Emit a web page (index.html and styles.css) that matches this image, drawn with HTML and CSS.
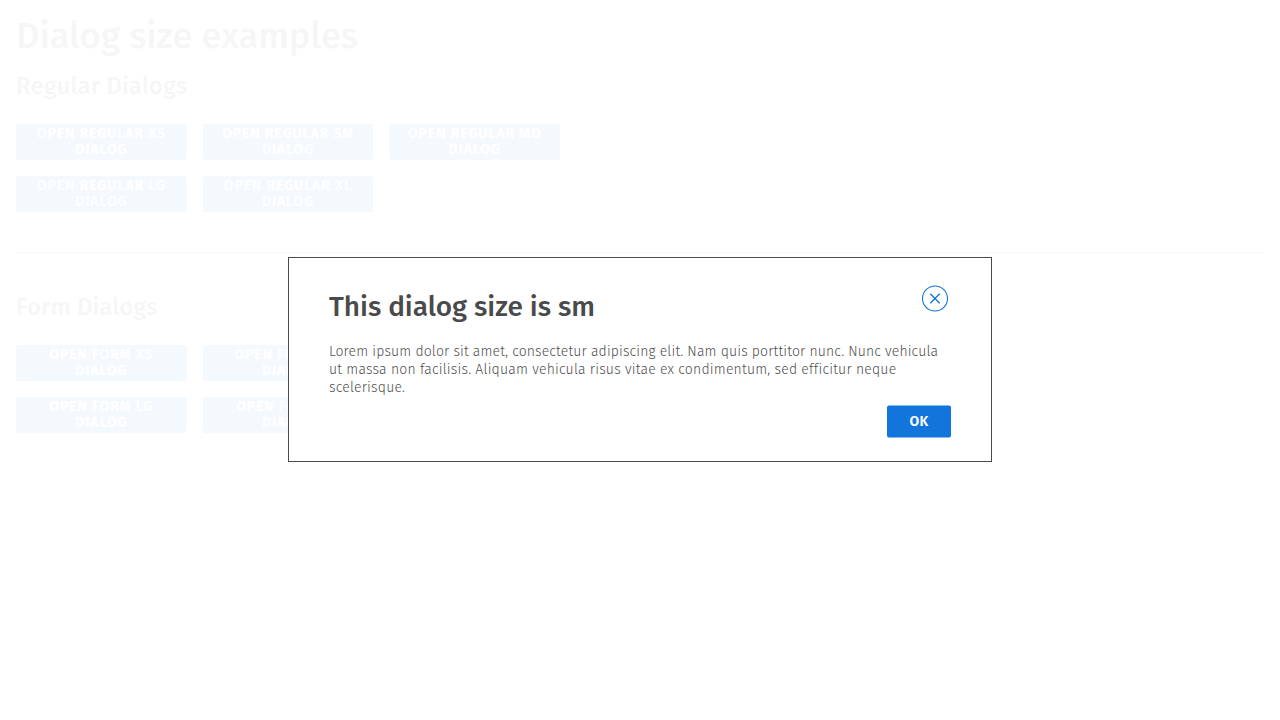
FILE: index.html
```html
<!DOCTYPE html>
<html lang="en">
<head>
<meta charset="utf-8">
<title>Dialog size examples</title>
<link rel="stylesheet" href="styles.css">
</head>
<body>
<main class="page">
  <h1 class="title">Dialog size examples</h1>
  <section class="group">
    <h2 class="subtitle">Regular Dialogs</h2>
    <div class="buttons">
      <button class="button">OPEN REGULAR XS<br>DIALOG</button>
      <button class="button">OPEN REGULAR SM<br>DIALOG</button>
      <button class="button">OPEN REGULAR MD<br>DIALOG</button>
      <button class="button">OPEN REGULAR LG<br>DIALOG</button>
      <button class="button">OPEN REGULAR XL<br>DIALOG</button>
    </div>
  </section>
  <hr class="divider">
  <section class="group">
    <h2 class="subtitle subtitle-form">Form Dialogs</h2>
    <div class="buttons">
      <button class="button">OPEN FORM XS<br>DIALOG</button>
      <button class="button">OPEN FORM SM<br>DIALOG</button>
      <button class="button button-blank" aria-label="Open form md dialog"></button>
      <button class="button">OPEN FORM LG<br>DIALOG</button>
      <button class="button">OPEN FORM XL<br>DIALOG</button>
    </div>
  </section>
</main>
<div class="backdrop">
  <div class="dialog" role="dialog" aria-labelledby="dialog-title">
    <div class="dialog-body">
      <header class="dialog-header">
        <h2 class="dialog-title" id="dialog-title">This dialog size is sm</h2>
        <button class="close" aria-label="Close">
          <svg width="28" height="28" viewBox="0 0 28 28" fill="none" stroke="#1175dc">
            <circle cx="14" cy="14" r="12.5" stroke-width="1.1"/>
            <path d="M9.3 9.3l9.4 9.4M18.7 9.3l-9.4 9.4" stroke-width="1.4"/>
          </svg>
        </button>
      </header>
      <p class="dialog-text"><span class="line-first">Lorem ipsum dolor sit amet, consectetur adipiscing elit. Nam quis porttitor nunc. Nunc vehicula</span><br><span class="line-rest">ut massa non facilisis. Aliquam vehicula risus vitae ex condimentum, sed efficitur neque<br>scelerisque.</span></p>
      <footer class="dialog-footer"><button class="ok">OK</button></footer>
    </div>
  </div>
</div>
</body>
</html>
```
FILE: styles.css
```css
* { box-sizing: border-box; }
body {
  margin: 0;
  height: 720px;
  overflow: hidden;
  background: #fff;
  color: #4a4a4a;
  font-family: "Fira Sans", "Noto Sans", sans-serif;
}
h1, h2, p { margin: 0; white-space: nowrap; }
button { border: 0; padding: 0; margin: 0; font-family: inherit; }
.page { padding: 16px; }
.title { font-size: 36px; line-height: 40px; font-weight: 500; letter-spacing: 0.08px; }
.subtitle { margin-top: 16px; font-size: 24px; line-height: 28px; font-weight: 500; letter-spacing: 0.1px; }
.buttons {
  display: grid;
  grid-template-columns: repeat(3, 170.67px);
  gap: 16px;
  margin-top: 24px;
}
.button {
  height: 36px;
  border-radius: 2px;
  background: #3090e0;
  color: #fff;
  font-size: 14px;
  line-height: 16px;
  font-weight: 600;
  letter-spacing: 0.92px;
  white-space: nowrap;
}
.button-blank { visibility: hidden; }
.divider { height: 1px; margin: 40px 0; border: 0; background: #4a4a4a; }
.subtitle-form { margin-top: 0; letter-spacing: 0.04px; }
.backdrop {
  position: fixed;
  inset: 0;
  display: flex;
  align-items: flex-start;
  justify-content: center;
  padding-top: 257px;
  background: rgba(255, 255, 255, 0.95);
}
.dialog {
  width: 704px;
  height: 205px;
  padding: 26px 40px 24px;
  border: 1px solid #4a4a4a;
  background: #fff;
}
.dialog-body { transform: translateY(0.5px); }
.dialog-header { display: flex; justify-content: space-between; height: 58px; }
.dialog-title { padding-top: 6px; font-size: 28px; line-height: 32px; font-weight: 500; letter-spacing: -0.04px; }
.close { width: 28px; height: 28px; margin-right: 2px; background: none; }
.close svg { display: block; }
.dialog-text { font-size: 14px; line-height: 18px; font-weight: 300; color: #505050; }
.line-first { letter-spacing: 0.13px; }
.line-rest { letter-spacing: 0.19px; }
.dialog-footer { display: flex; justify-content: flex-end; padding-top: 9px; }
.ok {
  width: 64px;
  height: 32px;
  border-radius: 2px;
  background: #1175dc;
  color: #fff;
  font-size: 14px;
  line-height: 16px;
  font-weight: 600;
  letter-spacing: 0.4px;
}
```
